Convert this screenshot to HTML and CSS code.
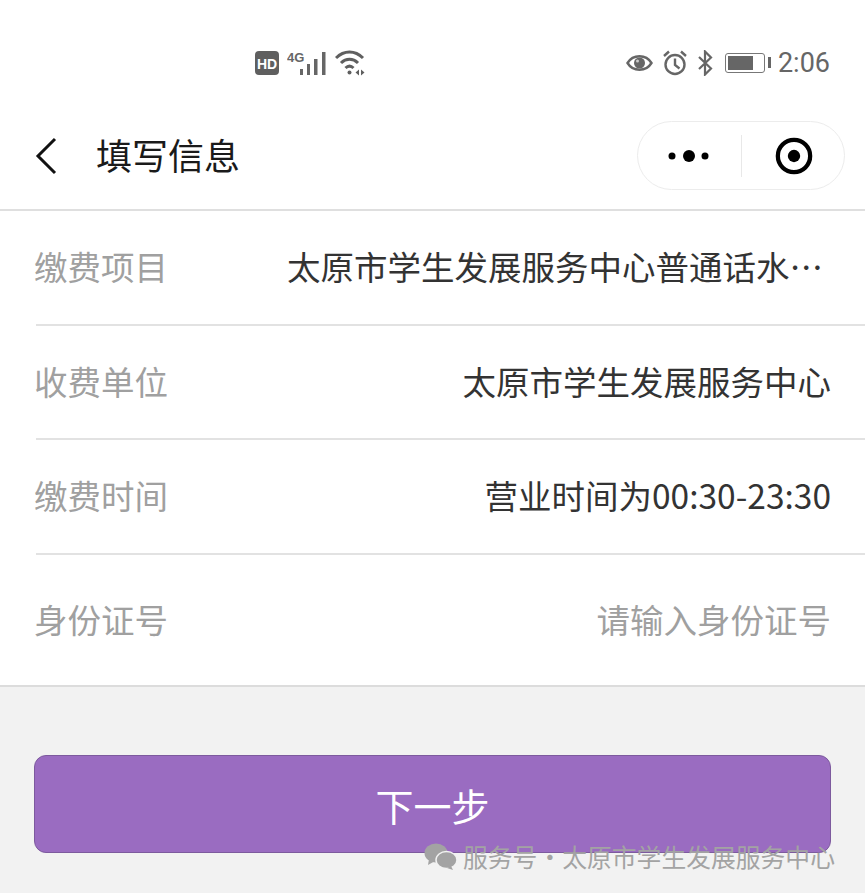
FILE: index.html
```html
<!DOCTYPE html>
<html lang="zh-CN">
<head>
    <meta charset="UTF-8">
    <title>填写信息</title>
    <link rel="stylesheet" href="styles.css">
</head>
<body>
    <!-- 状态栏 -->
    <div class="status-bar">
        <div class="status-left">
            <svg width="24" height="24" viewBox="0 0 24 24"><rect x="0" y="0" width="24" height="24" rx="4" fill="#5f5f5f"/><text x="12" y="17.500" text-anchor="middle" class="hd-text">HD</text></svg>
            <svg class="signal" width="40" height="26" viewBox="0 0 40 26">
                <text x="0" y="12" class="g-text">4G</text>
                <rect x="13" y="19" width="3" height="6" fill="#666"/>
                <rect x="20" y="14" width="3" height="11" fill="#666"/>
                <rect x="27" y="9" width="3.500" height="16" fill="#666"/>
                <rect x="35" y="2" width="3.500" height="23" fill="#666"/>
            </svg>
            <svg width="31" height="26" viewBox="0 0 31 26" fill="none" stroke="#5f5f5f" stroke-width="3">
                <path d="M1 8C9 0 20 0 28 8"/>
                <path d="M6 13C11 8 18 8 23 13"/>
                <path d="M10.500 18C13 15.500 16 15.500 18.500 18"/>
                <circle cx="14.500" cy="22.500" r="2" fill="#5f5f5f" stroke="none"/>
                <path d="M24 19.500L20.500 22.500L24 25.500ZM26 19.500L29.500 22.500L26 25.500Z" fill="#5f5f5f" stroke="none"/>
            </svg>
        </div>
        <div class="status-right">
            <svg width="27" height="20" viewBox="0 0 27 20"><path d="M1.500 10C7 1 20 1 25.500 10C20 19 7 19 1.500 10Z" fill="none" stroke="#666" stroke-width="2.400"/><circle cx="13.500" cy="10" r="5.500" fill="#666"/><circle cx="11.500" cy="8" r="1.500" fill="#ccc"/></svg>
            <svg width="26" height="26" viewBox="0 0 26 26" fill="none" stroke="#666" stroke-width="2.400"><circle cx="13" cy="14.500" r="9.500"/><path d="M13 8.500V15L17.500 18.500"/><path d="M2 6L7 1.500M24 6L19 1.500"/></svg>
            <svg width="17" height="26" viewBox="0 0 17 26" fill="none" stroke="#666" stroke-width="2.200"><path d="M2 7L14 18.500L8 24.500V1.500L14 7.500L2 19"/></svg>
            <div class="battery"><div class="battery-level"></div></div>
            <span class="clock">2:06</span>
        </div>
    </div>

    <!-- 导航栏 -->
    <div class="nav-bar">
        <svg class="back-icon" width="22" height="38" viewBox="0 0 22 38" fill="none" stroke="#111" stroke-width="3"><path d="M20 2L3 19L20 36"/></svg>
        <span class="nav-title">填写信息</span>
        <div class="capsule">
            <div class="capsule-cell">
                <svg width="42" height="14" viewBox="0 0 42 14" fill="#000"><circle cx="4" cy="7" r="3.500"/><circle cx="21" cy="7" r="6"/><circle cx="37" cy="7" r="3.500"/></svg>
            </div>
            <div class="capsule-line"></div>
            <div class="capsule-cell">
                <svg class="record-icon" width="38" height="38" viewBox="0 0 40 40"><circle cx="20" cy="20" r="17" fill="none" stroke="#000" stroke-width="4.500"/><circle cx="20" cy="20" r="6.500" fill="#000"/></svg>
            </div>
        </div>
    </div>

    <!-- 表单 -->
    <div class="form-list">
        <div class="form-row">
            <span class="form-label">缴费项目</span>
            <span class="form-value form-value-cut">太原市学生发展服务中心普通话水…</span>
        </div>
        <div class="form-row">
            <span class="form-label">收费单位</span>
            <span class="form-value">太原市学生发展服务中心</span>
        </div>
        <div class="form-row">
            <span class="form-label">缴费时间</span>
            <span class="form-value">营业时间为00:30-23:30</span>
        </div>
        <div class="form-row form-row-last">
            <span class="form-label">身份证号</span>
            <span class="form-value placeholder">请输入身份证号</span>
        </div>
    </div>

    <div class="btn-area">
        <button class="next-btn">下一步</button>
    </div>

    <!-- 公众号水印 -->
    <div class="watermark">
        <svg width="33" height="27" viewBox="0 0 33 27" fill="#a3a3a3"><ellipse cx="12" cy="10" rx="11.500" ry="9.500"/><path d="M5 16L4 22L11 18Z"/><ellipse cx="22.500" cy="17" rx="10.500" ry="8.500" stroke="#f2f2f2" stroke-width="1.500"/><path d="M27 23L29 27L23 25Z"/></svg>
        <span>服务号·太原市学生发展服务中心</span>
    </div>
</body>
</html>
```

FILE: styles.css
```css
/* 整体布局 */
body {
    margin: 0;
    height: 893px;
    overflow: hidden;
    position: relative;
    background: #f2f2f2;
    font-family: "Noto Sans CJK SC", "Liberation Sans", sans-serif;
}

/* 状态栏 */
.status-bar {
    height: 110px;
    background: #fff;
    display: flex;
    justify-content: space-between;
    align-items: center;
    padding: 16px 35px 0 255px;
    box-sizing: border-box;
}

.status-left {
    display: flex;
    align-items: center;
    gap: 8px;
}

.status-right {
    display: flex;
    align-items: center;
    gap: 9px;
}

.hd-text {
    font-family: "Liberation Sans", sans-serif;
    font-size: 14px;
    font-weight: bold;
    fill: #fff;
}

.g-text {
    font-family: "Liberation Sans", sans-serif;
    font-size: 13px;
    font-weight: bold;
    fill: #666;
}

.battery {
    width: 40px;
    height: 20px;
    border: 1.5px solid #777;
    border-radius: 3px;
    padding: 2px;
    box-sizing: border-box;
    margin-left: 2px;
    position: relative;
}

.battery::after {
    content: "";
    position: absolute;
    right: -7px;
    top: 3px;
    width: 3px;
    height: 11px;
    background: #666;
}

.battery-level {
    width: 25px;
    height: 100%;
    background: #666;
}

.clock {
    font-family: "Roboto", sans-serif;
    font-size: 27px;
    color: #666;
    margin-left: 4px;
}

/* 导航栏 */
.nav-bar {
    height: 91px;
    background: #fff;
    display: flex;
    align-items: center;
    padding: 0 20px 8px 35px;
    border-bottom: 2px solid #dfdfdf;
}

.back-icon {
    margin-right: 39px;
}

.nav-title {
    font-size: 36px;
    color: #1a1a1a;
    flex: 1;
    margin-bottom: 3px;
}

.capsule {
    width: 208px;
    height: 69px;
    box-sizing: border-box;
    border: 1.5px solid #ececec;
    border-radius: 35px;
    display: flex;
    align-items: center;
}

.capsule-cell {
    flex: 1;
    display: flex;
    justify-content: center;
}

.record-icon {
    margin-left: 3px;
}

.capsule-line {
    width: 1px;
    height: 42px;
    background: #e8e8e8;
}

/* 表单 */
.form-list {
    background: #fff;
    padding-left: 36px;
    border-bottom: 2px solid #dcdcdc;
}

.form-row {
    height: 114.500px;
    box-sizing: border-box;
    padding: 0 34px 3px 0;
    border-bottom: 2px solid #e2e2e2;
    display: flex;
    align-items: center;
    justify-content: space-between;
    font-size: 33.500px;
}

.form-row-last {
    height: 130.500px;
    border-bottom: none;
}

.form-label {
    color: #a0a0a0;
    margin-left: -2px;
    flex-shrink: 0;
}

.form-value {
    color: #333;
    white-space: nowrap;
}

.form-value-cut {
    margin-right: 8px;
}

.placeholder {
    color: #a0a0a0;
}

/* 按钮 */
.btn-area {
    padding: 68px 34px 0;
}

.next-btn {
    display: block;
    width: 100%;
    height: 98px;
    background: #9a6cc1;
    border: 1px solid #7d5a9e;
    border-radius: 12px;
    color: #fff;
    font-family: inherit;
    font-size: 38px;
}

/* 水印 */
.watermark {
    position: absolute;
    left: 424px;
    top: 838px;
    display: flex;
    align-items: center;
    gap: 6px;
    font-size: 24.800px;
    color: #a3a3a3;
    white-space: nowrap;
}
```
